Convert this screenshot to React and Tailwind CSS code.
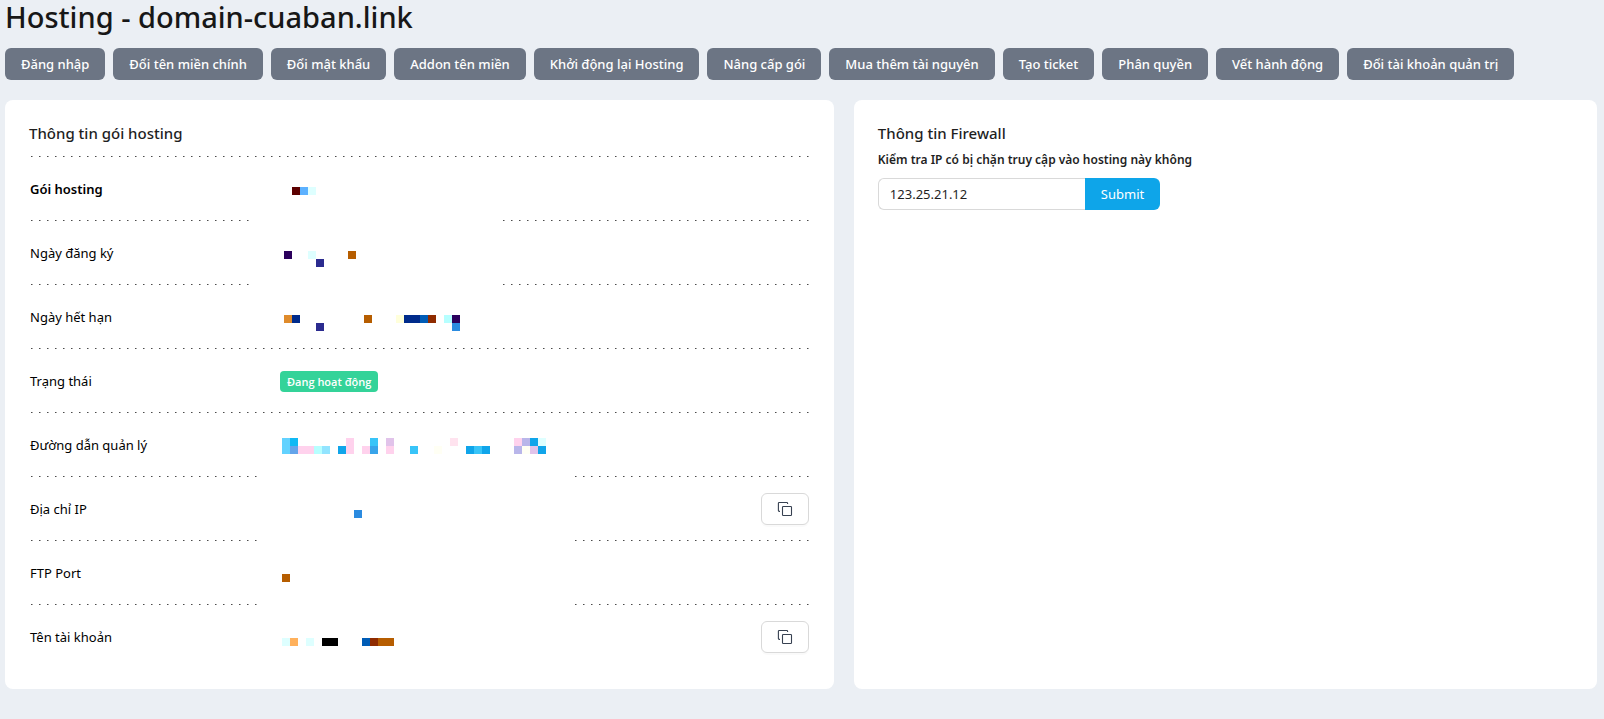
const ACTIONS = [
  "Đăng nhập",
  "Đổi tên miền chính",
  "Đổi mật khẩu",
  "Addon tên miền",
  "Khởi động lại Hosting",
  "Nâng cấp gói",
  "Mua thêm tài nguyên",
  "Tạo ticket",
  "Phân quyền",
  "Vết hành động",
  "Đổi tài khoản quản trị",
];

// Line styles: unbroken, or broken where the redaction covers it.
const LINE_FULL =
  "[background:linear-gradient(to_right,#4b4b4b_1px,#a3a3a3_1px,#a3a3a3_2px,transparent_2px)_2px_100%/8px_1px_repeat-x]";
const LINE_NARROW_GAP =
  "[background:linear-gradient(#fff,#fff)_222px_100%/250px_1px_no-repeat,linear-gradient(to_right,#4b4b4b_1px,#a3a3a3_1px,#a3a3a3_2px,transparent_2px)_2px_100%/8px_1px_repeat-x]";
const LINE_WIDE_GAP =
  "[background:linear-gradient(#fff,#fff)_230px_100%/314px_1px_no-repeat,linear-gradient(to_right,#4b4b4b_1px,#a3a3a3_1px,#a3a3a3_2px,transparent_2px)_2px_100%/8px_1px_repeat-x]";

// Each cell is [x, y, fill] in an area as tall as its row.
const ROWS = [
  {
    label: "Gói hosting",
    strong: true,
    line: LINE_NARROW_GAP,
    cells: [[12, 30, "#5c0000"], [20, 30, "#5cb1ff"], [28, 30, "#deffff"]],
  },
  {
    label: "Ngày đăng ký",
    line: LINE_NARROW_GAP,
    cells: [[4, 30, "#2b005c"], [28, 30, "#deffff"], [36, 38, "#2b2b8f"], [68, 30, "#b65d00"]],
  },
  {
    label: "Ngày hết hạn",
    line: LINE_FULL,
    cells: [
      [4, 30, "#df8b2b"], [12, 30, "#002b8b"], [36, 38, "#2b2b8f"], [84, 30, "#b65d00"],
      [116, 30, "#ffffdb"], [124, 30, "#002b8b"], [132, 30, "#002b8b"], [140, 30, "#005cb6"],
      [148, 30, "#8f2b00"], [164, 30, "#b6ffff"], [172, 30, "#2b005c"], [172, 38, "#2b8be0"],
    ],
  },
  { label: "Trạng thái", line: LINE_FULL, badge: "Đang hoạt động" },
  {
    label: "Đường dẫn quản lý",
    line: LINE_WIDE_GAP,
    cells: [
      [2, 25, "#62d2ff"], [10, 25, "#10b9f4"], [2, 33, "#62d2ff"], [10, 33, "#64a4ea"],
      [18, 33, "#ffd2ed"], [26, 33, "#ffd2ed"], [34, 33, "#b7ffff"], [42, 33, "#92e4ff"],
      [58, 33, "#10a5ea"], [66, 25, "#ffd2ed"], [66, 33, "#ffd2ed"], [82, 33, "#ffd2ed"],
      [90, 25, "#38c4f8"], [90, 33, "#38a4ea"], [106, 25, "#e1c3ea"], [106, 33, "#ffd2ed"],
      [130, 33, "#38c4f8"], [154, 33, "#fffff4"], [170, 25, "#ffe3ef"], [186, 33, "#10a5ea"],
      [194, 33, "#38c4f8"], [202, 33, "#10a5ea"], [234, 25, "#ffd2ed"], [242, 25, "#b9b6ea"],
      [250, 25, "#10a5ea"], [258, 25, "#deffff"], [234, 33, "#b9b6ea"], [242, 33, "#fffff4"],
      [250, 33, "#e1c3ea"], [258, 33, "#10a5ea"],
    ],
  },
  { label: "Địa chỉ IP", line: LINE_WIDE_GAP, copy: true, cells: [[74, 33, "#2b8be0"]] },
  { label: "FTP Port", line: LINE_WIDE_GAP, cells: [[2, 33, "#b65d00"]] },
  {
    label: "Tên tài khoản",
    line: "",
    copy: true,
    cells: [
      [2, 33, "#deffff"], [10, 33, "#ffb15c"], [26, 33, "#deffff"], [42, 33, "#000000"],
      [50, 33, "#000000"], [82, 33, "#005cb6"], [90, 33, "#8f2b00"], [98, 33, "#b65d00"],
      [106, 33, "#b65d00"],
    ],
  },
];

function Mosaic({ cells }) {
  return (
    <svg className="block" width="272" height="64" shapeRendering="crispEdges" aria-hidden="true">
      {cells.map(([x, y, fill]) => (
        <rect key={`${x}-${y}`} x={x} y={y} width="8" height="8" fill={fill} />
      ))}
    </svg>
  );
}

function CopyIcon() {
  return (
    <svg width="16" height="16" viewBox="0 0 16 16" fill="none" stroke="currentColor" aria-hidden="true">
      <rect x="5.5" y="5.5" width="9" height="9" rx="0.75" strokeWidth="1.1" />
      <path d="M3 10.4H2.2a.8.8 0 0 1-.8-.8V2.3a.8.8 0 0 1 .8-.8h7.6a.8.8 0 0 1 .8.8V3" strokeWidth="1.1" />
    </svg>
  );
}

function InfoRow({ row }) {
  return (
    <div className={`flex h-16 items-center pr-px ${row.line}`}>
      <dt className={`w-[251px] shrink-0 pt-px pl-px ${row.strong ? "font-semibold" : ""}`}>{row.label}</dt>
      <dd className="flex min-w-0 flex-1 items-center justify-between">
        {row.badge && (
          <span className="rounded bg-[#34d399] px-[7px] font-['Open_Sans','Noto_Sans',sans-serif] text-[11px] leading-[21px] font-semibold text-white">
            {row.badge}
          </span>
        )}
        {row.cells && <Mosaic cells={row.cells} />}
        {row.copy && (
          <button
            type="button"
            aria-label={`Sao chép ${row.label}`}
            className="flex h-8 w-12 shrink-0 items-center justify-center rounded-md border border-[#d9d9d9] bg-white text-[#374151] shadow-[0_2px_0_rgba(0,0,0,0.02)]"
          >
            <CopyIcon />
          </button>
        )}
      </dd>
    </div>
  );
}

export default function App() {
  return (
    <main className="min-h-screen bg-[#ebeff4] pr-[7px] pb-[30px] pl-[5px] font-['Noto_Sans','Open_Sans',sans-serif] text-[13px] text-black">
      <h1 className="pb-[14px] text-[29px] leading-[34px] font-medium text-[#171717]">Hosting - domain-cuaban.link</h1>

      <div className="flex flex-wrap gap-2">
        {ACTIONS.map((label) => (
          <button
            key={label}
            type="button"
            className="h-8 rounded-md bg-[#6c7584] px-4 pt-px text-[13px] font-medium text-white"
          >
            {label}
          </button>
        ))}
      </div>

      <div className="mt-5 grid grid-cols-[29fr_26fr] gap-5">
        <section className="rounded-lg bg-white px-6 pb-5">
          <h2 className={`pt-[21px] pb-3 text-[15px] leading-6 font-medium text-[#1f1f1f] ${LINE_FULL}`}>
            Thông tin gói hosting
          </h2>
          <dl>
            {ROWS.map((row) => (
              <InfoRow key={row.label} row={row} />
            ))}
          </dl>
        </section>

        <section className="rounded-lg bg-white px-6 pt-[21px] pb-5 text-[#1f1f1f]">
          <h2 className="text-[15px] leading-6 font-medium">Thông tin Firewall</h2>
          <form onSubmit={(event) => event.preventDefault()}>
            <label htmlFor="firewall-ip" className="block pt-[5px] pb-2 text-[12px] leading-5 font-semibold">
              Kiểm tra IP có bị chặn truy cập vào hosting này không
            </label>
            <div className="flex">
              <input
                id="firewall-ip"
                type="text"
                defaultValue="123.25.21.12"
                className="h-8 w-[207px] rounded-l-md border border-r-0 border-[#d9d9d9] bg-white px-[11px] text-[13px] outline-none"
              />
              <button type="submit" className="h-8 rounded-r-md bg-[#0ea5e9] px-4 pt-px text-[13px] text-white">
                Submit
              </button>
            </div>
          </form>
        </section>
      </div>
    </main>
  );
}
